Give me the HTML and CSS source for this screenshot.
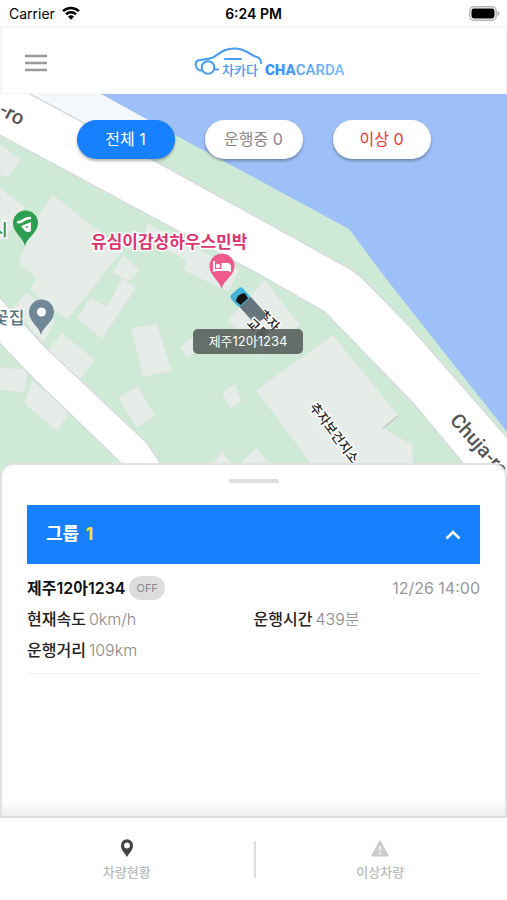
FILE: index.html
```html
<!DOCTYPE html>
<html lang="ko">
<head>
    <meta charset="UTF-8">
    <meta name="viewport" content="width=device-width, initial-scale=1.0">
    <title>CHACARDA</title>
    <link rel="stylesheet" href="styles.css">
</head>
<body>

    <div class="status-bar">
        <div class="carrier">
            <span>Carrier</span>
            <svg width="20" height="14" viewBox="0 0 20 14">
                <path d="M2 5.2a11.5 11.5 0 0 1 16 0M5 8.3a7.2 7.2 0 0 1 10 0" fill="none" stroke="#000" stroke-width="2.5"/>
                <path d="M10 13.8L7 10.6a4.3 4.3 0 0 1 6 0z"/>
            </svg>
        </div>
        <div class="time">6:24 PM</div>
        <svg class="battery" width="31" height="15" viewBox="0 0 31 15">
            <rect x="0.8" y="0.8" width="26.4" height="13.4" rx="4" fill="#fff" stroke="#b5b5b5" stroke-width="1.4"/>
            <rect x="2.5" y="2.5" width="23" height="10" rx="2.4"/>
            <path d="M28.5 5c2.4.8 2.4 4.2 0 5z" fill="#aaa"/>
        </svg>
    </div>

    <header class="header">
        <button type="button" class="btn-menu" aria-label="메뉴">
            <svg width="22" height="18" viewBox="0 0 22 18">
                <path d="M0 2h22M0 9h22M0 16h22" stroke="#999" stroke-width="2.4"/>
            </svg>
        </button>
        <a href="#" class="logo" aria-label="차카다 CHACARDA">
            <svg width="150" height="32" viewBox="0 0 150 32">
                <defs>
                    <linearGradient id="logoColor" x1="0" x2="1">
                        <stop offset="0" stop-color="#2f8cf0"/>
                        <stop offset="1" stop-color="#7dbcfb"/>
                    </linearGradient>
                </defs>
                <g fill="none" stroke="#459cf2" stroke-width="2" stroke-linecap="round" stroke-linejoin="round">
                    <path d="M7 23.5C1 23 .5 15 4 13.5c3-1.5 9-.5 15-3C26 6.500 30 1.500 40 1.500c11 0 15 5 20 7.500 5 1.500 7 3 7 7"/>
                    <circle cx="14" cy="20.500" r="6.300"/>
                    <path d="M20.500 22.500h3.500M31 12h16"/>
                </g>
                <text x="28" y="28" class="logo-ko">차카다</text>
                <text x="71" y="28" class="logo-en" fill="url(#logoColor)">CHA<tspan class="logo-light">CARDA</tspan></text>
            </svg>
        </a>
    </header>

    <main class="content">
        <section class="map">
            <svg class="map-canvas" viewBox="0 94 507 382" preserveAspectRatio="xMidYMin slice">
                <rect y="94" width="507" height="382" fill="#ceead6"/>
                <!-- sea -->
                <path d="M101 94L175 135L253 177L349 229L387 280L507 432V94z" fill="#9dc0f9"/>
                <path d="M30 94H101L175 135L155 161z" fill="#f4f8fb"/>
                <!-- buildings -->
                <g fill="#e6ece8" stroke="#dbe2de" stroke-width=".6">
                    <path d="M0 143L20 160L8 178L0 175z"/>
                    <path d="M0 188L25 207L10 232L0 240z"/>
                    <path d="M53 195L123 250L67 320L30 290L36 278L18 262L38 216z"/>
                    <path d="M123 255L140 270L130 281L112 273z"/>
                    <path d="M122 278L136 288L102 339L77 318L90 298L107 307z"/>
                    <path d="M27 292L55 322L43 343L13 308z"/>
                    <path d="M62 333L95 360L78 382L45 353z"/>
                    <path d="M0 367L28 370L24 393L0 390z"/>
                    <path d="M32 380L70 412L57 431L24 403z"/>
                    <path d="M131 328L157 324L172 371L143 377z"/>
                    <path d="M118 398L138 386L155 416L137 428z"/>
                    <path d="M222 393L235 384L242 402L230 408z"/>
                    <path d="M147 223L240 270L228 292L183 270L186 260L144 238z"/>
                    <path d="M180 348L198 332L208 346L188 357z"/>
                    <path d="M265 280L300 325L262 356L227 320z"/>
                    <path d="M333 335L398 415L383 428L413 445V476H320L256 390z"/>
                    <path d="M211 466L222 451L234 466zM238 466L256 448L272 466z"/>
                </g>
                <path d="M383 428L398 416" stroke="#bfc6c2" stroke-width="1.200"/>
                <!-- roads -->
                <g fill="#fff" stroke="#d9dcdc" stroke-width="1.500">
                    <path d="M-4 76L30 94L153 160L253 215L352 270L362 278L413 330L512 443V520L463 463L413 403L325 312L260 275L-4 133z"/>
                    <path d="M-4 294L0 298L45 347L147 443L163 467L170 482H142L120 462L33 378L-4 339z"/>
                </g>
                <!-- pins -->
                <g transform="translate(25 246)">
                    <path d="M0 0C-2-9-12-13-12-23a12.500 12.500 0 0 1 25 0C13-13 2-9 0 0z" fill="#2e9e50"/>
                    <path d="M-7-24c3 2 5-4 12-4" fill="none" stroke="#fff" stroke-width="2.600" stroke-linecap="round"/>
                    <path d="M-4-20L6-24v9q-3 2-6 0z" fill="#fff"/>
                    <circle cx="2" cy="-19" r="1" fill="#2e9e50"/>
                </g>
                <g transform="translate(41 335)">
                    <path d="M0 0C-2-9-12-13-12-23a12.500 12.500 0 0 1 25 0C13-13 2-9 0 0z" fill="#6f8796"/>
                    <circle cx="0.500" cy="-23" r="4.600" fill="#fff"/>
                </g>
                <g transform="translate(221.500 289)">
                    <path d="M0 0C-2-9-12-13-12-23a12.500 12.500 0 0 1 25 0C13-13 2-9 0 0z" fill="#ee5a8c"/>
                    <path d="M-7.500-28v11M-7.500-19H8.500M8.500-17v-7" fill="none" stroke="#fff" stroke-width="1.800"/>
                    <path d="M0-26h6q3 0 3 3v4H0z" fill="#fff"/>
                    <circle cx="-3.500" cy="-23" r="2.200" fill="#fff"/>
                </g>
                <!-- place names -->
                <text x="-8" y="236" class="place place-shop">시</text>
                <text x="-7" y="324" class="place place-flower">꽃집</text>
                <text x="91" y="248" class="place place-hotel">유심이감성하우스민박</text>
                <text transform="translate(-2 114) rotate(28)" class="road-name">-ro</text>
                <text transform="translate(449 421) rotate(48)" class="road-name">Chuja-ro</text>
                <text transform="translate(309 407) rotate(53)" class="place place-small">추자보건지소</text>
                <text transform="translate(257 315) rotate(45)" class="place place-small">추자</text>
                <!-- vehicle -->
                <g transform="translate(241 298) rotate(-42)">
                    <rect x="-7" y="5" width="15" height="25" fill="#65747d"/>
                    <rect x="-8" y="-9" width="16" height="15" rx="4" fill="#42b4dc"/>
                    <path d="M-6-1q6-5 12 0l-1 6H-5z" fill="#111"/>
                </g>
                <text transform="translate(246 324) rotate(45)" class="place place-small">교통</text>
                <rect x="193" y="329" width="110" height="25" rx="5" fill="#525a56" fill-opacity=".86"/>
                <text x="248" y="346" class="car-label">제주12아1234</text>
            </svg>

            <div class="filters">
                <button type="button" class="filter active">전체 1</button>
                <button type="button" class="filter">운행중 0</button>
                <button type="button" class="filter error">이상 0</button>
            </div>
        </section>

        <section class="sheet">
            <div class="handle"></div>

            <button type="button" class="group">
                <span class="group-name">그룹 <span class="group-count">1</span></span>
                <svg width="16" height="10" viewBox="0 0 16 10">
                    <path d="M1.500 8.500L8 2l6.500 6.500" fill="none" stroke="#fff" stroke-width="2.600"/>
                </svg>
            </button>

            <article class="car">
                <div class="car-top">
                    <strong>제주12아1234</strong>
                    <span class="badge">OFF</span>
                    <time>12/26 14:00</time>
                </div>
                <dl class="car-info">
                    <div><dt>현재속도</dt><dd>0km/h</dd></div>
                    <div><dt>운행시간</dt><dd>439분</dd></div>
                    <div><dt>운행거리</dt><dd>109km</dd></div>
                </dl>
            </article>
        </section>
    </main>

    <nav class="tab-bar">
        <a href="#" class="tab">
            <svg width="18" height="20" viewBox="0 0 18 20">
                <path d="M9 19C7 15.500 3 12 3 7.500a6 6.200 0 0 1 12 0C15 12 11 15.500 9 19z" fill="#444"/>
                <circle cx="9" cy="7.500" r="2.900" fill="#fff"/>
            </svg>
            <span>차량현황</span>
        </a>
        <a href="#" class="tab">
            <svg width="18" height="20" viewBox="0 0 18 20">
                <path d="M9 3.500L16.500 17.500h-15z" fill="#ccc" stroke="#ccc" stroke-width="2" stroke-linejoin="round"/>
                <path d="M9 8v5M9 14.500v2" stroke="#eee" stroke-width="2"/>
            </svg>
            <span>이상차량</span>
        </a>
    </nav>

</body>
</html>
```

FILE: styles.css
```css
* {
    box-sizing: border-box;
}

body {
    margin: 0;
    font-family: Inter, "Noto Sans CJK KR", sans-serif;
    font-size: 16px;
    background-color: #ffffff;
    color: #222222;
    display: flex;
    flex-direction: column;
    min-height: 100vh;
}

button {
    font-family: inherit;
    border: none;
    cursor: pointer;
}

a {
    text-decoration: none;
}

svg {
    display: block;
}

.status-bar {
    display: grid;
    grid-template-columns: 1fr auto 1fr;
    align-items: center;
    height: 26px;
    padding: 0 7px;
    font-size: 14px;
    color: #000000;
}

.carrier {
    display: flex;
    align-items: center;
    gap: 6px;
    padding-left: 2px;
}

.time {
    font-weight: 600;
}

.battery {
    justify-self: end;
}

.header {
    display: grid;
    grid-template-columns: 1fr auto 1fr;
    align-items: center;
    height: 68px;
    padding: 4px 23px 0;
    border: 2px solid #f5f5f5;
    border-bottom-width: 1px;
}

.btn-menu {
    justify-self: start;
    padding: 0;
    background: none;
}

.logo {
    margin-left: 30px;
}

.logo-ko {
    font-size: 13px;
    font-weight: 500;
    fill: #459cf2;
}

.logo-en {
    font-family: Roboto, sans-serif;
    font-size: 15px;
    font-weight: 900;
}

.logo-light {
    font-weight: 500;
}

.content {
    flex: 1;
    display: flex;
    flex-direction: column;
}

.map {
    position: relative;
    height: 382px;
    overflow: hidden;
}

.map-canvas {
    position: absolute;
    top: 0;
    left: 0;
    width: 100%;
    height: 100%;
}

.place {
    font-size: 17px;
    font-weight: 500;
    stroke: #ffffff;
    stroke-width: 3px;
    paint-order: stroke;
}

.place-shop {
    fill: #2e8b4a;
}

.place-flower {
    fill: #5b7483;
}

.place-hotel {
    fill: #dd3470;
    font-weight: bold;
}

.place-small {
    font-size: 13px;
    fill: #222222;
}

.road-name {
    font-family: Roboto, sans-serif;
    font-size: 20px;
    font-weight: 500;
    fill: #555555;
}

.car-label {
    font-size: 13px;
    fill: #ffffff;
    text-anchor: middle;
}

.filters {
    position: relative;
    display: flex;
    justify-content: center;
    gap: 30px;
    padding-top: 26px;
}

.filter {
    width: 98px;
    height: 39px;
    padding: 0 0 3px;
    border-radius: 20px;
    background-color: #ffffff;
    color: #888888;
    font-size: 16px;
    box-shadow: 0 2px 3px rgba(0, 0, 0, 0.3);
}

.filter.active {
    background-color: #1680ff;
    color: #ffffff;
}

.filter.error {
    color: #ee3333;
}

.sheet {
    position: relative;
    flex: 1;
    margin-top: -13px;
    padding: 14px 25px 0;
    background: linear-gradient(to top, #eeeeee, #ffffff 16px);
    border: 2px solid #e2e2e2;
    border-bottom: none;
    border-radius: 14px 14px 0 0;
}

.handle {
    width: 50px;
    height: 4px;
    margin: 0 auto 22px;
    border-radius: 2px;
    background-color: #dddddd;
}

.group {
    display: flex;
    justify-content: space-between;
    align-items: center;
    width: 100%;
    height: 59px;
    padding: 0 19px;
    background-color: #1680ff;
    color: #ffffff;
    font-size: 18px;
    font-weight: bold;
}

.group-name {
    padding-bottom: 6px;
}

.group-count {
    margin-left: 2px;
    color: #f5e02c;
}

.car {
    padding: 11px 0;
    border-bottom: 1px solid #eeeeee;
}

.car-top {
    display: flex;
    align-items: center;
    gap: 4px;
    height: 25px;
    color: #999999;
}

.car-top strong {
    font-weight: 600;
    line-height: 24px;
    color: #111111;
}

.car-top time {
    margin-left: auto;
}

.badge {
    padding: 0 7px;
    border-radius: 12px;
    background-color: #dddddd;
    color: #888888;
    font-size: 11px;
    line-height: 24px;
}

.car-info {
    display: grid;
    grid-template-columns: 1fr 1fr;
    gap: 7px 0;
    margin: 7px 0 0;
    line-height: 24px;
}

.car-info div {
    display: flex;
    gap: 3px;
}

.car-info dd {
    margin: 0;
    color: #888888;
    font-weight: 300;
}

.car-info dt {
    font-weight: 500;
}

.tab-bar {
    display: flex;
    align-items: center;
    height: 84px;
    border-top: 2px solid #dddddd;
}

.tab {
    flex: 1;
    display: flex;
    flex-direction: column;
    align-items: center;
    gap: 5px;
    color: #bbbbbb;
    font-size: 13px;
    font-weight: 500;
    line-height: 18px;
}

.tab + .tab {
    position: relative;
}

.tab + .tab::before {
    content: "";
    position: absolute;
    left: 0;
    top: 3px;
    width: 2px;
    height: 37px;
    background-color: #dddddd;
}
```
